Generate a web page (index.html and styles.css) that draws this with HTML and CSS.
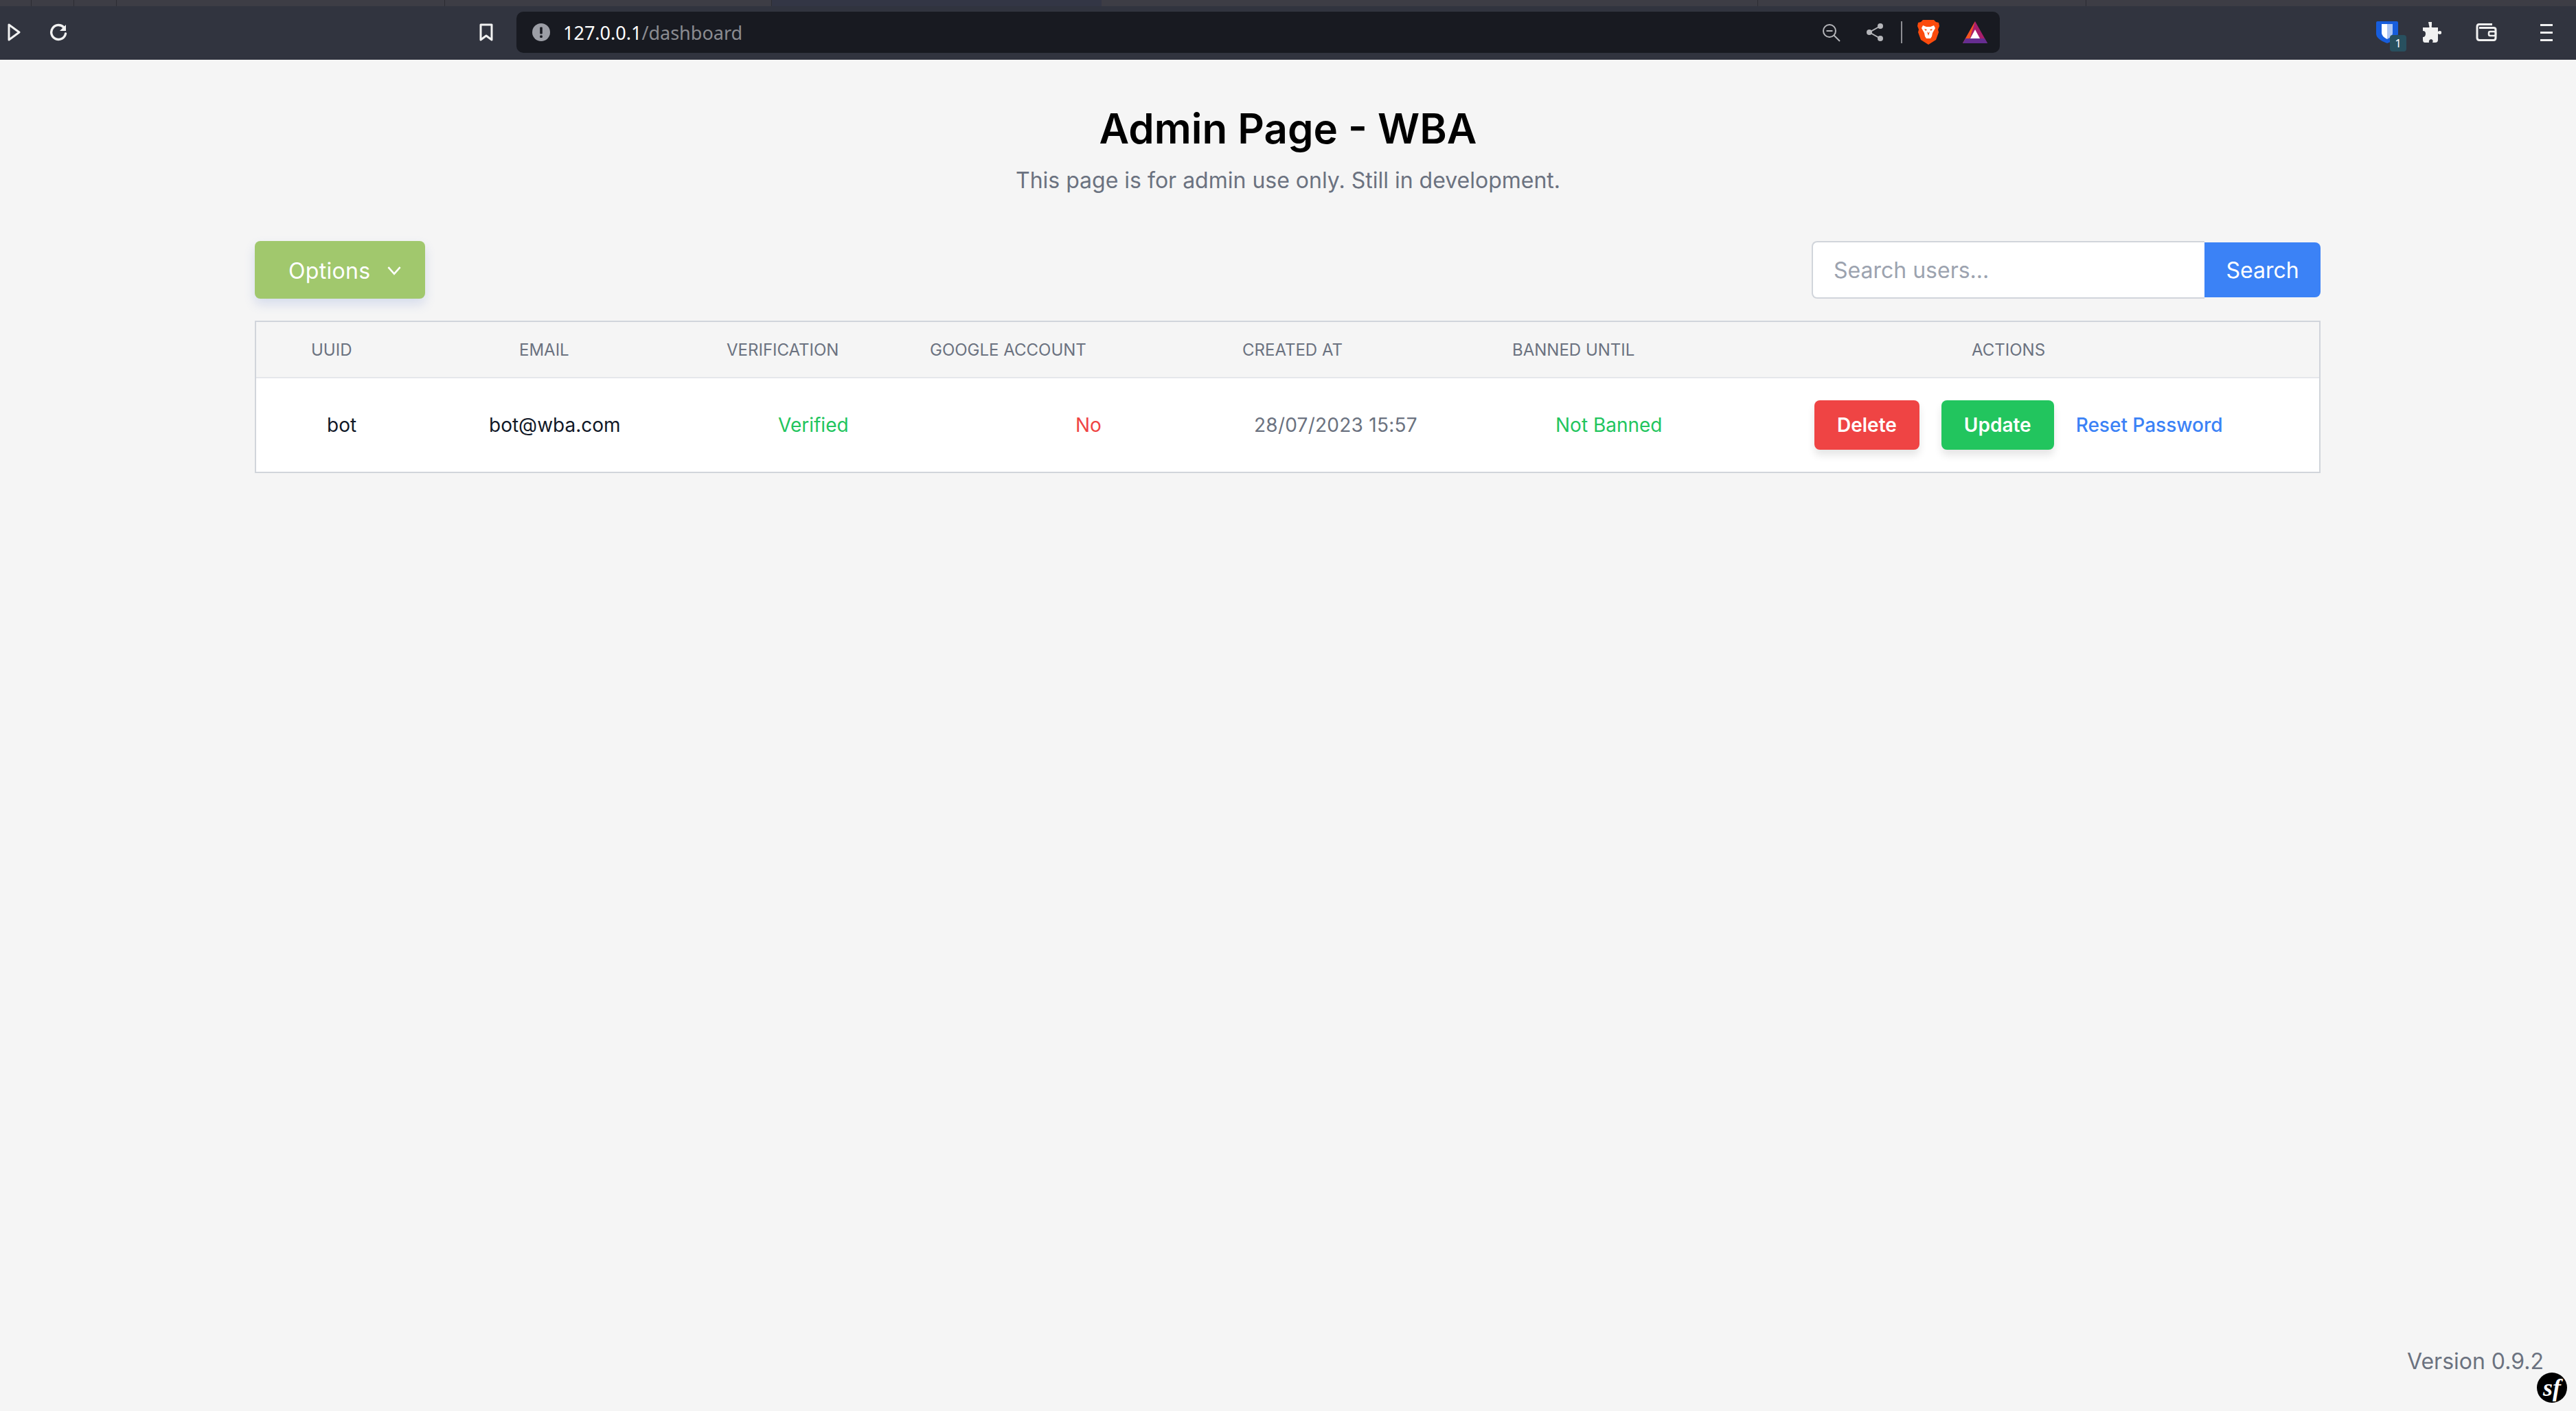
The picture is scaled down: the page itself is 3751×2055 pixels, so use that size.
FILE: index.html
```html
<!DOCTYPE html>
<html lang="en">

<head>
  <meta charset="UTF-8" />
  <title>Admin Page - WBA</title>
  <link rel="stylesheet" href="styles.css">
</head>

<body>
  <!-- browser chrome -->
  <div class="tab-strip">
    <div class="tab-seg seg-a"></div>
    <div class="tab-seg seg-b"></div>
    <div class="tab-seg seg-b"></div>
    <div class="tab-seg seg-c"></div>
    <div class="tab-seg seg-d"></div>
    <div class="tab-seg seg-active"></div>
    <div class="tab-seg seg-e"></div>
    <div class="tab-seg seg-f"></div>
    <div class="tab-seg seg-g"></div>
  </div>
  <div class="browser-bar">
    <svg class="ico-play" viewBox="0 0 19 26"><path d="M2 2 L2 24 L17 13 Z" fill="none" stroke="#f1f1f1" stroke-width="3" stroke-linejoin="round"/></svg>
    <svg class="ico-reload" viewBox="0 0 26 26"><path d="M21 6 A10.5 10.5 0 1 0 23.5 15" fill="none" stroke="#f1f1f1" stroke-width="3.4" stroke-linecap="round"/><path d="M24 2 V11 H15 Z" fill="#f1f1f1"/></svg>
    <svg class="ico-bookmark" viewBox="0 0 20 26"><path d="M2 2 H18 V24 L10 18 L2 24 Z" fill="none" stroke="#f1f1f1" stroke-width="3" stroke-linejoin="round"/></svg>
    <div class="address-bar">
      <svg class="ico-info" viewBox="0 0 26 26"><circle cx="13" cy="13" r="13" fill="#9c9ea6"/><rect x="11.2" y="5.5" width="3.6" height="10" rx="1" fill="#181a21"/><rect x="11.2" y="17.5" width="3.6" height="3.6" rx="1" fill="#181a21"/></svg>
      <span class="url"><span class="url-host">127.0.0.1</span>/dashboard</span>
      <svg class="ico-zoom" viewBox="0 0 27 27"><circle cx="11" cy="11" r="9" fill="none" stroke="#b5b6ba" stroke-width="2"/><path d="M6.5 11 H15.5" stroke="#b5b6ba" stroke-width="2"/><path d="M17.5 17.5 L26 26" stroke="#b5b6ba" stroke-width="2"/></svg>
      <svg class="ico-share" viewBox="0 0 26 26"><path d="M21 4 L5 13 L21 22" fill="none" stroke="#b5b6ba" stroke-width="2"/><circle cx="21" cy="4" r="4" fill="#b5b6ba"/><circle cx="5" cy="13" r="4" fill="#b5b6ba"/><circle cx="21" cy="22" r="4" fill="#b5b6ba"/></svg>
      <div class="addr-sep"></div>
      <svg class="ico-brave" viewBox="0 0 32 36">
        <path d="M8 0 H24 L27 3 L31 4 L32 9 L30 14 L31 18 L27 29 L16 36 L5 29 L1 18 L2 14 L0 9 L1 4 L5 3 Z" fill="#fb4b0d"/>
        <path d="M8 8 L13 10 H19 L24 8 L26 12 L22 19 L21 24 L19 27 H13 L11 24 L10 19 L6 12 Z" fill="#fff"/>
        <path d="M14 17 L16 23 L18 17 L16 19 Z" fill="#fb4b0d"/>
        <path d="M10 13 L14 14 L12 16 Z M22 13 L18 14 L20 16 Z" fill="#fb4b0d"/>
      </svg>
      <svg class="ico-rewards" viewBox="0 0 36 32">
        <path d="M18 0 L0 32 H36 Z" fill="#a91e6c"/>
        <path d="M18 0 L0 32 L10 26 Z" fill="#f4551f"/>
        <path d="M18 12 L11 25 H25 Z" fill="#fff"/>
        <path d="M0 32 L4 25 H32 L36 32 Z" fill="#662d91"/>
      </svg>
    </div>
    <div class="ext-bitwarden">
      <svg class="ico-bitwarden" viewBox="0 0 32 32"><path d="M2 0 H30 Q32 0 32 2 V18 Q32 26 16 32 Q0 26 0 18 V2 Q0 0 2 0 Z" fill="#175ddc"/><path d="M8 4 H24 V17 Q24 22 16 26 Q16 14 16 4 Z M16 4 H8 V17 Q8 22 16 26 Z" fill="#fff"/><path d="M16 4 H24 V17 Q24 22 16 26 Z" fill="#175ddc" opacity="0.35"/></svg>
      <span class="ext-badge">1</span>
    </div>
    <svg class="ico-puzzle" viewBox="0 0 30 30"><path d="M11 0 H16 V5 Q15 8 17 8 H25 V14 Q28 12 30 14 V17 Q28 19 25 17 V26 Q25 30 21 30 H17 Q19 26 15 25 Q11 26 12 30 H6 Q3 30 3 26 V22 Q7 22 7 17 Q7 13 3 13 V8 H12 Q13 8 12 5 Z" fill="#f1f1f1"/></svg>
    <svg class="ico-wallet" viewBox="0 0 31 26"><path d="M5 1.5 H24 M2 5 Q2 1.5 5 1.5 M2 5 V21 Q2 24.5 5.5 24.5 H26 Q29 24.5 29 21 V9 Q29 6.5 26 6.5 H5" fill="none" stroke="#f1f1f1" stroke-width="3"/><rect x="19" y="12" width="10" height="6" rx="2" fill="none" stroke="#f1f1f1" stroke-width="2.5"/></svg>
    <div class="menu-icon">
      <span></span>
      <span></span>
      <span></span>
    </div>
  </div>

  <div class="page">
    <div class="page-head">
      <h1>Admin Page - WBA</h1>
      <p>This page is for admin use only. Still in development.</p>
    </div>

    <div class="controls">
      <button class="options-btn">Options
        <svg class="chevron" viewBox="0 0 20 13"><path d="M2 2 L10 11 L18 2" fill="none" stroke="#fff" stroke-width="2.4"/></svg>
      </button>
      <form class="search-form">
        <input class="search-input" type="text" placeholder="Search users..." />
        <button class="search-btn" type="button">Search</button>
      </form>
    </div>

    <table class="users">
      <colgroup>
        <col class="col-1"><col class="col-2"><col class="col-3"><col class="col-4"><col class="col-5"><col class="col-6"><col class="col-7">
      </colgroup>
      <thead>
        <tr>
          <th>UUID</th>
          <th>Email</th>
          <th>Verification</th>
          <th>Google Account</th>
          <th>Created at</th>
          <th>Banned until</th>
          <th>Actions</th>
        </tr>
      </thead>
      <tbody>
        <tr>
          <td class="dark">bot</td>
          <td class="dark">bot@wba.com</td>
          <td class="green">Verified</td>
          <td class="red">No</td>
          <td class="date">28/07/2023 15:57</td>
          <td class="green">Not Banned</td>
          <td>
            <div class="actions">
              <button class="btn btn-delete">Delete</button>
              <button class="btn btn-update">Update</button>
              <a class="reset-link" href="#">Reset Password</a>
            </div>
          </td>
        </tr>
      </tbody>
    </table>
  </div>

  <div class="version">Version 0.9.2</div>
  <div class="sf-badge"><span>sf</span></div>
</body>

</html>
```

FILE: styles.css
```css
html,
body {
  margin: 0;
  padding: 0;
}

body {
  font-family: Inter, "Liberation Sans", sans-serif;
  background-color: #f5f5f5;
  width: 3751px;
  height: 2055px;
  overflow: hidden;
  display: flex;
  flex-direction: column;
  position: relative;
}

/* browser chrome */
.tab-strip {
  display: flex;
  height: 9px;
  background-color: #3d3d45;
}

.tab-seg {
  height: 9px;
  box-sizing: border-box;
  border-right: 1px solid #2c2c33;
}

.seg-a { width: 46px; }
.seg-b { width: 62px; }
.seg-c { width: 478px; }
.seg-d { width: 476px; }
.seg-active { width: 480px; background-color: #333645; border-right: none; }
.seg-e { width: 956px; }
.seg-f { width: 478px; }
.seg-g { flex: 1; border-right: none; }

.browser-bar {
  display: flex;
  align-items: center;
  height: 78px;
  box-sizing: border-box;
  padding: 0 0 2px 11px;
  background-color: #31343f;
}

.browser-bar svg {
  display: block;
  flex: none;
}

.ico-play { width: 19px; height: 26px; }
.ico-reload { width: 26px; height: 26px; margin-left: 42px; }
.ico-bookmark { width: 20px; height: 26px; margin-left: 600px; }

.address-bar {
  display: flex;
  align-items: center;
  width: 2160px;
  height: 60px;
  margin-left: 34px;
  box-sizing: border-box;
  padding-left: 23px;
  background-color: #181a21;
  border-radius: 10px;
}

.ico-info { width: 26px; height: 26px; }

.url {
  margin-left: 19px;
  font-family: "Noto Sans", sans-serif;
  font-size: 27px;
  color: #8b8c91;
  flex: 1;
}

.url-host { color: #ffffff; }

.ico-zoom { width: 27px; height: 27px; }
.ico-share { width: 26px; height: 26px; margin-left: 37px; }

.addr-sep {
  width: 2px;
  height: 32px;
  margin-left: 25px;
  background-color: #8d8e93;
}

.ico-brave { width: 32px; height: 36px; margin-left: 22px; }
.ico-rewards { width: 36px; height: 32px; margin-left: 34px; margin-right: 18px; }

.ext-bitwarden {
  position: relative;
  width: 32px;
  height: 32px;
  margin-left: 548px;
}

.ico-bitwarden { width: 32px; height: 32px; }

.ext-badge {
  position: absolute;
  left: 20px;
  top: 20px;
  width: 24px;
  height: 24px;
  background-color: #28505f;
  border-radius: 4px;
  color: #fff;
  font-family: "Noto Sans", sans-serif;
  font-size: 17px;
  line-height: 24px;
  text-align: center;
}

.ico-puzzle { width: 30px; height: 30px; margin-left: 33px; }
.ico-wallet { width: 31px; height: 26px; margin-left: 50px; }

.menu-icon {
  display: flex;
  flex-direction: column;
  gap: 8px;
  margin-left: 63px;
}

.menu-icon span {
  display: block;
  width: 18px;
  height: 3px;
  background-color: #f1f1f1;
}

/* page */
.page {
  width: 3009px;
  margin: 0 auto;
}

.page-head {
  padding-top: 64px;
  text-align: center;
}

.page-head h1 {
  margin: 0;
  font-size: 60px;
  line-height: 72px;
  font-weight: 600;
  color: #000000;
}

.page-head p {
  margin: 16px 0 0;
  font-size: 32px;
  line-height: 48px;
  color: #6b7280;
}

.controls {
  display: flex;
  justify-content: space-between;
  align-items: center;
  margin-top: 64px;
}

.options-btn {
  display: flex;
  align-items: center;
  width: 248px;
  height: 84px;
  padding: 2px 0 0 49px;
  border: none;
  border-radius: 8px;
  background-color: #a1c86d;
  color: #fff;
  font-family: inherit;
  font-size: 32px;
  letter-spacing: 0.3px;
  box-shadow: 0 8px 16px rgba(90, 120, 200, 0.2);
}

.chevron {
  width: 22px;
  height: 14px;
  margin-left: 24px;
}

.search-form {
  display: flex;
  align-items: center;
  margin: 0 1px 0 0;
}

.search-input {
  width: 572px;
  height: 84px;
  box-sizing: border-box;
  padding: 0 30px;
  border: 2px solid #d1d5db;
  border-right: none;
  border-radius: 8px 0 0 8px;
  background-color: #fff;
  font-family: inherit;
  font-size: 32px;
}

.search-input::placeholder {
  color: #9ca3af;
  opacity: 1;
}

.search-btn {
  width: 169px;
  height: 80px;
  padding: 0;
  border: none;
  border-radius: 0 8px 8px 0;
  background-color: #3b82f6;
  color: #fff;
  font-family: inherit;
  font-size: 32px;
}

.users {
  width: 3008px;
  margin-top: 32px;
  table-layout: fixed;
  border-collapse: separate;
  border-spacing: 0;
  border: 2px solid #d1d5db;
}

.col-1 { width: 317px; }
.col-2 { width: 350px; }
.col-3 { width: 300px; }
.col-4 { width: 450px; }
.col-5 { width: 400px; }
.col-6 { width: 410px; }

.users th {
  height: 80px;
  padding: 0;
  border-bottom: 2px solid #e5e7eb;
  font-size: 24px;
  font-weight: 400;
  color: #6b7280;
  text-align: left;
  text-transform: uppercase;
}

.users td {
  height: 136px;
  padding: 0;
  background-color: #fff;
  font-size: 28px;
  color: #6b7280;
  text-align: left;
}

.users th:nth-child(1) { padding-left: 80px; }
.users th:nth-child(2) { padding-left: 66px; }
.users th:nth-child(3) { padding-left: 18px; }
.users th:nth-child(4) { padding-left: 14px; }
.users th:nth-child(5) { padding-left: 19px; }
.users th:nth-child(6) { padding-left: 12px; }
.users th:nth-child(7) { padding-left: 271px; }

.users td:nth-child(1) { padding-left: 103px; }
.users td:nth-child(2) { padding-left: 22px; }
.users td:nth-child(3) { padding-left: 93px; }
.users td:nth-child(4) { padding-left: 226px; }
.users td:nth-child(5) { padding-left: 36px; }
.users td:nth-child(6) { padding-left: 75px; }
.users td:nth-child(7) { padding-left: 42px; }

.users td.dark { color: #111827; }
.users td.green { color: #22c55e; }
.users td.red { color: #ef4444; }
.users td.date { letter-spacing: 0.25px; }

.actions {
  display: flex;
  align-items: center;
  gap: 32px;
}

.btn {
  height: 72px;
  padding: 0 33px;
  border: none;
  border-radius: 8px;
  color: #fff;
  font-family: inherit;
  font-size: 28px;
  font-weight: 600;
  box-shadow: 0 8px 12px rgba(0, 0, 0, 0.1);
}

.btn-delete { background-color: #ef4444; }
.btn-update { background-color: #22c55e; }

.reset-link {
  font-size: 28px;
  font-weight: 500;
  color: #3b82f6;
  text-decoration: none;
}

.version {
  margin-top: auto;
  padding: 0 47px 48px 0;
  text-align: right;
  font-size: 32px;
  line-height: 48px;
  color: #6b7280;
}

.sf-badge {
  position: absolute;
  left: 3694px;
  top: 1999px;
  width: 44px;
  height: 44px;
  border-radius: 50%;
  background-color: #000;
  display: flex;
  align-items: center;
  justify-content: center;
  color: #fff;
  font-family: "Liberation Serif", serif;
  font-size: 36px;
  font-style: italic;
  font-weight: 700;
  line-height: 44px;
}
```
